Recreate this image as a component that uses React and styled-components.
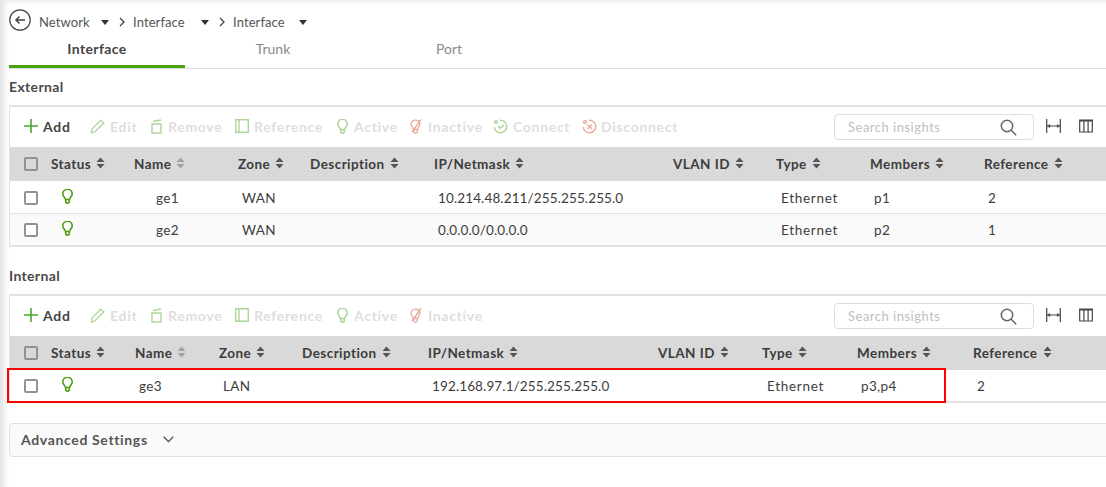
import React from 'react';
import styled, { createGlobalStyle } from 'styled-components';

const GlobalStyle = createGlobalStyle`
  html, body {
    margin: 0;
    height: 100%;
    background: #fff;
    overflow: hidden;
  }
  body {
    font-family: 'Lato', 'Liberation Sans', sans-serif;
    color: #333;
  }
`;

const Page = styled.div`
  position: relative;
  box-sizing: border-box;
  width: 1106px;
  height: 487px;
  padding-left: 9px;
  overflow: hidden;
  box-shadow: inset 7px 3px 6px -3px rgba(0, 0, 0, 0.12);
`;

const Breadcrumb = styled.div`
  display: flex;
  align-items: center;
  height: 40px;
  padding-top: 4px;
  box-sizing: border-box;
  font-size: 13px;
  color: #555;
  letter-spacing: 0.1px;
`;

const BackButton = styled.span`
  display: flex;
  margin: -4px 8px 0 0;
`;

const Crumb = styled.span`
  display: flex;
  align-items: center;
  width: ${p => p.$width}px;
`;

const CrumbCaret = styled.span`
  width: 0;
  height: 0;
  margin-left: auto;
  border-left: 4.5px solid transparent;
  border-right: 4.5px solid transparent;
  border-top: 5px solid #333;
`;

const CrumbArrow = styled.span`
  display: flex;
  margin: 0 8px 0 10px;
`;

const Tabs = styled.div`
  display: flex;
  height: 29px;
  box-sizing: border-box;
  border-bottom: 1px solid #ddd;
`;

const Tab = styled.div`
  box-sizing: border-box;
  width: 176px;
  height: 28px;
  margin-bottom: -1px;
  text-align: center;
  font-size: 14px;
  line-height: 18px;
  font-weight: ${p => (p.$active ? 700 : 400)};
  letter-spacing: ${p => (p.$active ? '0.4px' : '0')};
  color: ${p => (p.$active ? '#444' : '#8a8a8a')};
  border-bottom: ${p => (p.$active ? '3px solid #47a00e' : 'none')};
`;

const SectionTitle = styled.h2`
  margin: 0;
  height: ${p => p.$height}px;
  line-height: 17px;
  padding-top: ${p => p.$top}px;
  box-sizing: border-box;
  font-size: 14px;
  font-weight: 700;
  letter-spacing: 0.35px;
  color: #4a4a4a;
`;

const Panel = styled.div`
  border-top: 2px solid #e2e2e2;
  border-left: 1px solid #e2e2e2;
`;

const Toolbar = styled.div`
  display: flex;
  align-items: center;
  box-sizing: border-box;
  height: 40px;
  padding: 0 0 2px 14px;
`;

const ToolButton = styled.span`
  display: flex;
  align-items: center;
  gap: ${p => p.$gap}px;
  width: ${p => p.$width}px;
  font-size: 14px;
  font-weight: 700;
  letter-spacing: 0.7px;
  color: ${p => (p.$enabled ? '#444' : '#dedede')};
  flex: none;
`;

const ToolRight = styled.div`
  display: flex;
  align-items: center;
  margin-left: auto;
  width: 272px;
  flex: none;
`;

const SearchBox = styled.div`
  display: flex;
  flex: none;
  align-items: center;
  justify-content: space-between;
  box-sizing: border-box;
  width: 200px;
  height: 26px;
  padding: 0 16px 0 13px;
  margin: 2px 12px 0 0;
  border: 1px solid #ddd;
  border-radius: 4px;
  font-size: 13px;
  letter-spacing: 0.5px;
  color: #c0c0c0;
`;

const IconSlot = styled.span`
  display: flex;
  flex: none;
  margin-right: 18px;
`;

const Grid = styled.div`
  display: grid;
  grid-template-columns: ${p => p.$columns};
  align-items: center;
`;

const HeaderRow = styled(Grid)`
  height: 34px;
  background: #d9d9d9;
  font-size: 13.5px;
  font-weight: 700;
  color: #3c3c3c;
  letter-spacing: 0.45px;
`;

const BodyRow = styled(Grid)`
  position: relative;
  box-sizing: border-box;
  height: 33px;
  padding-top: ${p => (p.$last ? 0 : 1)}px;
  font-size: 13.5px;
  color: #3d3d3d;
  letter-spacing: 0.35px;
  background: ${p => (p.$striped ? '#fafafa' : '#fff')};
  border-bottom: ${p => (p.$last ? '2px solid #e2e2e2' : '1px solid #e2e2e2')};
`;

const HeadCell = styled.div`
  display: flex;
  align-items: center;
  gap: 5px;
  white-space: nowrap;
`;

const Cell = styled.div`
  padding-left: ${p => p.$indent || 4}px;
  white-space: nowrap;
`;

const IpCell = styled(Cell)`
  letter-spacing: 0.13px;
`;

const TypeCell = styled(Cell)`
  padding-left: 5px;
  letter-spacing: 0.7px;
`;

const CheckCell = styled.div`
  display: flex;
  padding-left: 14px;
`;

const CheckBox = styled.span`
  box-sizing: border-box;
  width: 14px;
  height: 14px;
  border: 2px solid #8f929b;
  border-radius: 2px;
  background: #fff;
`;

const HeaderCheck = styled(CheckBox)`
  background: transparent;
`;

const StatusCell = styled.div`
  display: flex;
  padding-left: 11px;
  margin-top: -2px;
`;

const Highlight = styled.div`
  position: absolute;
  left: -3px;
  top: -2px;
  width: 939px;
  height: 35px;
  box-sizing: border-box;
  border: 2px solid #ff0000;
  pointer-events: none;
`;

const Advanced = styled.div`
  display: flex;
  align-items: center;
  gap: 15px;
  box-sizing: border-box;
  height: 34px;
  margin-top: 20px;
  padding: 0 0 2px 11px;
  background: #fafafa;
  border: 1px solid #e0e0e0;
  border-right: none;
  border-radius: 4px 0 0 4px;
  font-size: 14px;
  font-weight: 700;
  color: #555;
  letter-spacing: 0.65px;
`;

const SortIcon = ({ light }) => (
  <svg width="9" height="12" viewBox="0 0 9 12" style={{ marginTop: -2 }}>
    <path d="M4.5 0.5 8.5 5H0.5Z M4.5 11.5 8.5 7H0.5Z" fill={light ? '#a2a2a2' : '#555'} />
  </svg>
);

const BackIcon = () => (
  <svg width="22" height="22" viewBox="0 0 22 22" fill="none" stroke="#444">
    <circle cx="11" cy="11" r="10.2" strokeWidth="1.2" />
    <path d="M16 11H7M10.5 7.5 7 11l3.5 3.5" strokeWidth="1.5" />
  </svg>
);

const ArrowIcon = () => (
  <svg width="6" height="10" viewBox="0 0 6 10" fill="none" stroke="#444" strokeWidth="1.3">
    <path d="M1 1l4 4-4 4" />
  </svg>
);

const PlusIcon = () => (
  <svg width="14" height="14" viewBox="0 0 14 14" stroke="#4ea72e" strokeWidth="1.6">
    <path d="M7 0v14M0 7h14" />
  </svg>
);

const EditIcon = () => (
  <svg width="15" height="15" viewBox="0 0 15 15" fill="none" stroke="#aed69a" strokeWidth="1.3">
    <path d="M10.8 1.2 13.8 4 5 12.8 1.5 14 2 10Z" />
  </svg>
);

const RemoveIcon = () => (
  <svg width="11" height="15" viewBox="0 0 11 15" fill="none" stroke="#aed69a" strokeWidth="1.4">
    <path d="M1 5h9v9H1zM2 2.5 10 1" />
  </svg>
);

const ReferenceIcon = () => (
  <svg width="14" height="14" viewBox="0 0 14 14" fill="none" stroke="#aed69a" strokeWidth="1.4">
    <path d="M.7.7h12.6v12.6H.7zM4 .7v12.6" />
  </svg>
);

const Bulb = ({ color }) => (
  <svg width="11" height="15" viewBox="0 0 11 15" fill="none" stroke={color} strokeWidth="1.6">
    <path d="M3.5 10.5C3.2 8.5.8 7.5.8 5A4.7 4.7 0 0 1 10.2 5C10.2 7.5 7.8 8.5 7.5 10.5ZM3.7 11v2.2l1.3 1h1l1.3-1V11" />
  </svg>
);

const InactiveIcon = () => (
  <svg width="12" height="15" viewBox="0 0 12 15" fill="none" stroke="#e8ab9c" strokeWidth="1.3">
    <path d="M3.5 10.5C3.2 8.5 1 7.5 1 5A4.7 4.7 0 0 1 10 4C10 7 8 8.5 7.5 10.5ZM3.7 11v2.2l1.3 1h1l1.3-1V11M11 .5 2 13" />
  </svg>
);

const ConnectIcon = () => (
  <svg width="15" height="15" viewBox="0 0 15 15" fill="none" stroke="#aed69a" strokeWidth="1.4">
    <path d="M7 1.2A6.3 6.3 0 1 1 1.2 8M5 7l2.3 2.3L11 5.5" />
    <circle cx="3" cy="3" r="1.4" />
  </svg>
);

const DisconnectIcon = () => (
  <svg width="15" height="15" viewBox="0 0 15 15" fill="none" stroke="#e8ab9c" strokeWidth="1.4">
    <path d="M7 1.2A6.3 6.3 0 1 1 1.2 8M5.5 5.5l4.5 4.5M10 5.5 5.5 10" />
    <circle cx="3" cy="3" r="1.4" />
  </svg>
);

const SearchIcon = () => (
  <svg width="17" height="17" viewBox="0 0 17 17" fill="none" stroke="#666" strokeWidth="1.5">
    <circle cx="7" cy="7" r="5.7" />
    <path d="M11 11l5.2 5.2" />
  </svg>
);

const FitIcon = () => (
  <svg width="15" height="14" viewBox="0 0 15 14" fill="none" stroke="#444" strokeWidth="1.2">
    <path d="M.7 0v14M14.3 0v14M1 7h13" />
    <path d="M1.5 7l2.2-1.6v3.2ZM13.5 7l-2.2-1.6v3.2Z" fill="#444" strokeWidth=".5" />
  </svg>
);

const ColumnsIcon = () => (
  <svg width="14" height="14" viewBox="0 0 14 14" fill="none" stroke="#444" strokeWidth="1.2">
    <path d="M.7 1h12.6v12H.7zM4.9 1v12M9.1 1v12M.7 2h12.6" />
  </svg>
);

const ChevronIcon = () => (
  <svg width="11" height="7" viewBox="0 0 11 7" fill="none" stroke="#555" strokeWidth="1.3">
    <path d="M.7.7 5.5 5.5 10.3.7" />
  </svg>
);

const baseTools = [
  { label: 'Add', icon: <PlusIcon />, width: 66, gap: 5, enabled: true },
  { label: 'Edit', icon: <EditIcon />, width: 61, gap: 5 },
  { label: 'Remove', icon: <RemoveIcon />, width: 84, gap: 6 },
  { label: 'Reference', icon: <ReferenceIcon />, width: 102, gap: 5 },
  { label: 'Active', icon: <Bulb color="#aed69a" />, width: 73, gap: 6 },
  { label: 'Inactive', icon: <InactiveIcon />, width: 83, gap: 6 },
];

const externalTools = [
  ...baseTools,
  { label: 'Connect', icon: <ConnectIcon />, width: 89, gap: 5 },
  { label: 'Disconnect', icon: <DisconnectIcon />, width: 100, gap: 4 },
];

const headers = ['Status', 'Name', 'Zone', 'Description', 'IP/Netmask', 'VLAN ID', 'Type', 'Members', 'Reference'];

const externalColumns = '41px 83px 104px 72px 124px 239px 103px 94px 114px 1fr';
const internalColumns = '41px 84px 84px 83px 126px 230px 104px 95px 116px 1fr';

const externalRows = [
  { name: 'ge1', zone: 'WAN', ip: '10.214.48.211/255.255.255.0', members: 'p1', reference: '2' },
  { name: 'ge2', zone: 'WAN', ip: '0.0.0.0/0.0.0.0', members: 'p2', reference: '1' },
];

const internalRows = [
  { name: 'ge3', zone: 'LAN', ip: '192.168.97.1/255.255.255.0', members: 'p3,p4', reference: '2', marked: true },
];

function InterfaceTable({ tools, columns, rows, nameIndent }) {
  return (
    <Panel>
      <Toolbar>
        {tools.map(tool => (
          <ToolButton key={tool.label} $width={tool.width} $gap={tool.gap} $enabled={tool.enabled}>
            {tool.icon}
            {tool.label}
          </ToolButton>
        ))}
        <ToolRight>
          <SearchBox>
            Search insights
            <SearchIcon />
          </SearchBox>
          <IconSlot><FitIcon /></IconSlot>
          <IconSlot><ColumnsIcon /></IconSlot>
        </ToolRight>
      </Toolbar>
      <HeaderRow $columns={columns}>
        <CheckCell><HeaderCheck /></CheckCell>
        {headers.map(title => (
          <HeadCell key={title}>
            {title}
            <SortIcon light={title === 'Name'} />
          </HeadCell>
        ))}
      </HeaderRow>
      {rows.map((row, i) => (
        <BodyRow key={row.name} $columns={columns} $striped={i % 2 === 1} $last={i === rows.length - 1}>
          <CheckCell><CheckBox /></CheckCell>
          <StatusCell><Bulb color="#4a9e10" /></StatusCell>
          <Cell $indent={nameIndent}>{row.name}</Cell>
          <Cell>{row.zone}</Cell>
          <Cell />
          <IpCell>{row.ip}</IpCell>
          <Cell />
          <TypeCell>Ethernet</TypeCell>
          <Cell>{row.members}</Cell>
          <Cell>{row.reference}</Cell>
          {row.marked && <Highlight />}
        </BodyRow>
      ))}
    </Panel>
  );
}

export default function App() {
  return (
    <Page>
      <GlobalStyle />
      <Breadcrumb>
        <BackButton><BackIcon /></BackButton>
        <Crumb $width={70}>Network<CrumbCaret /></Crumb>
        <CrumbArrow><ArrowIcon /></CrumbArrow>
        <Crumb $width={76}>Interface<CrumbCaret /></Crumb>
        <CrumbArrow><ArrowIcon /></CrumbArrow>
        <Crumb $width={74}>Interface<CrumbCaret /></Crumb>
      </Breadcrumb>
      <Tabs>
        <Tab $active>Interface</Tab>
        <Tab>Trunk</Tab>
        <Tab>Port</Tab>
      </Tabs>
      <SectionTitle $height={36} $top={9}>External</SectionTitle>
      <InterfaceTable tools={externalTools} columns={externalColumns} rows={externalRows} nameIndent={22} />
      <SectionTitle $height={47} $top={20}>Internal</SectionTitle>
      <InterfaceTable tools={baseTools} columns={internalColumns} rows={internalRows} nameIndent={4} />
      <Advanced>Advanced Settings<ChevronIcon /></Advanced>
    </Page>
  );
}
